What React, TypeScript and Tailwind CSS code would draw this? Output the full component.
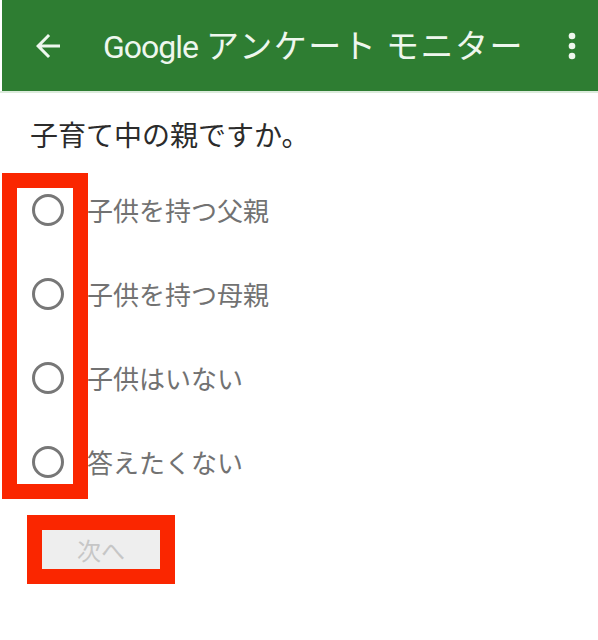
import React from 'react';

const options = ['子供を持つ父親', '子供を持つ母親', '子供はいない', '答えたくない'];

const jp = { fontFamily: '"Noto Sans CJK JP", sans-serif' };

export default function App() {
  return (
    <div className="w-[598px] h-[640px] bg-white overflow-hidden" style={jp}>
      {/* App bar */}
      <header className="h-[91px] ml-[2px] bg-[#2e7d32] flex items-center text-[#eef7ee]">
        <svg className="ml-[28px] w-[36px] h-[36px]" viewBox="0 0 24 24" fill="currentColor">
          <path d="M20 11H7.83l5.59-5.59L12 4l-8 8 8 8 1.41-1.41L7.83 13H20v-2z" />
        </svg>
        <h1
          className="ml-[37px] text-[32px] leading-none whitespace-nowrap"
          style={{ fontFamily: 'Roboto, "Noto Sans CJK JP", sans-serif' }}
        >
          <span className="tracking-[-1px]">Google</span>{' '}
          <span className="text-[33px] tracking-[1.5px]" style={jp}>アンケート モニター</span>
        </h1>
        <svg className="ml-auto mr-[6px] w-[40px] h-[40px]" viewBox="0 0 24 24" fill="currentColor">
          <circle cx="12" cy="6" r="2" />
          <circle cx="12" cy="12" r="2" />
          <circle cx="12" cy="18" r="2" />
        </svg>
      </header>
      <div className="h-[2px] bg-[#dcebdc]" />

      <main className="pt-[27px]">
        <p className="pl-[30px] text-[28px] leading-[28px] text-[#2b2b2b]">子育て中の親ですか。</p>

        <div className="relative mt-[20px]">
          {options.map((o) => (
            <label key={o} className="h-[84px] flex items-center pl-[32px]">
              <span className="w-[32px] h-[32px] rounded-full border-[3px] border-[#777777]" />
              <span className="ml-[23px] text-[26px] leading-none text-[#727272]">{o}</span>
            </label>
          ))}
          {/* annotation frame */}
          <div className="absolute left-[2px] top-[5px] w-[86px] h-[326px] border-[15px] border-[#fa2600]" />
        </div>

        <button
          className="mt-[26px] ml-[42px] w-[118px] h-[39px] bg-[#eeeeee] text-[24px] leading-none text-[#c6c6c6] outline-[15px] outline-solid outline-[#fa2600]"
          style={jp}
        >
          次へ
        </button>
      </main>
    </div>
  );
}
